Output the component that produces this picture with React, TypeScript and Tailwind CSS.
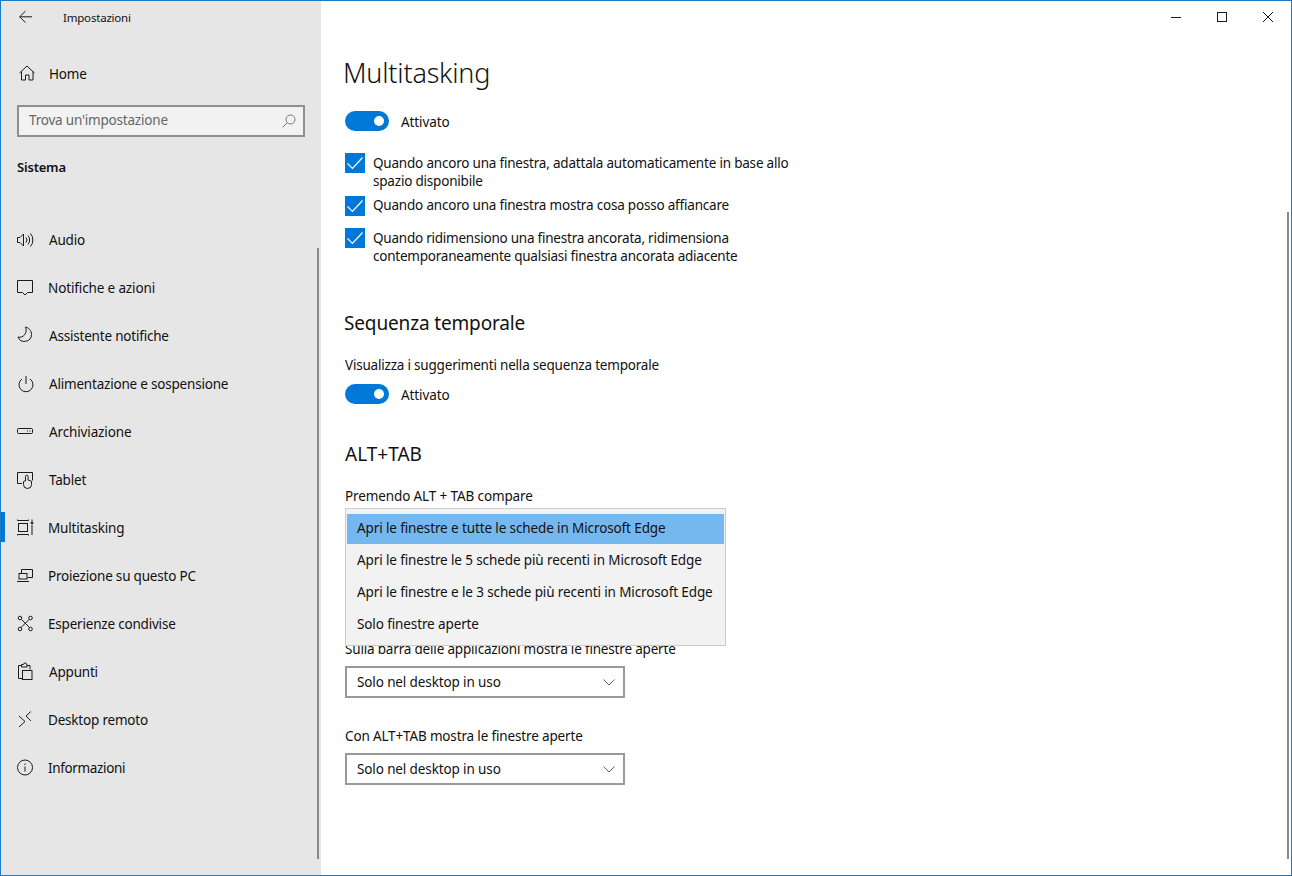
import React from "react";

const I = ({ children }: { children: React.ReactNode }) => (
  <svg width="20" height="20" viewBox="1 0 20 20" fill="none" stroke="#1a1a1a" strokeWidth="1" className="shrink-0">
    {children}
  </svg>
);

const icons: Record<string, React.ReactNode> = {
  Audio: (
    <I>
      <path d="M1.500 7.500h2.500l3.500-3.500v12l-3.500-3.500h-2.500z" />
      <path d="M10 7.500a4 4 0 0 1 0 5M12 5.500a7 7 0 0 1 0 9M14.500 3.500a10 10 0 0 1 0 13" />
    </I>
  ),
  "Notifiche e azioni": (
    <I>
      <path d="M1.500 2.500h15v12h-5l-2.500 2.500l-2.500-2.500h-5z" />
    </I>
  ),
  "Assistente notifiche": (
    <I>
      <path d="M9.500 1c3 .5 6 3.500 6 7.500a7 7 0 0 1-13.500 2.500c5 1.500 10-4 7.500-10z" />
    </I>
  ),
  "Alimentazione e sospensione": (
    <I>
      <path d="M10 2v8M6 5a7 7 0 1 0 8 0" />
    </I>
  ),
  Archiviazione: (
    <I>
      <rect x="1.500" y="6.500" width="15" height="5" rx="1" />
      <path d="M11 9h1M13.500 9h1" />
    </I>
  ),
  Tablet: (
    <I>
      <path d="M6 13.500h-4.500v-11h15v8" />
      <path d="M9.500 11V6.500a1.300 1.300 0 0 1 2.600 0V10l3.400 1.200v3.300a4 4 0 0 1-8 0v-2.500a1.500 1.500 0 0 1 2-1" />
    </I>
  ),
  Multitasking: (
    <I>
      <path d="M1.500 1.500v1h11v-1M1.500 17.500v-1h11v1" />
      <rect x="2.500" y="5.500" width="9" height="8" />
      <path d="M16 1.500v2M16 7v10" />
      <circle cx="16" cy="5" r="1" fill="#1a1a1a" />
    </I>
  ),
  "Proiezione su questo PC": (
    <I>
      <path d="M5.500 7V3.500h11v8h-5" />
      <rect x="3" y="7.500" width="8" height="5.500" />
      <path d="M1 15.500h12" />
    </I>
  ),
  "Esperienze condivise": (
    <I>
      <circle cx="4" cy="4" r="1.800" />
      <circle cx="14.500" cy="4" r="1.800" />
      <circle cx="4" cy="15" r="1.800" />
      <circle cx="14.500" cy="15" r="1.800" />
      <path d="M5.500 5.500l8 8M13 5.500l-8 8" />
    </I>
  ),
  Appunti: (
    <I>
      <path d="M6.500 16.500h-4v-13h3M11 3.500h3v4" />
      <path d="M5.500 5V2.500h2a1.500 1.500 0 0 1 3 0h.500V5z" />
      <rect x="6.500" y="8.500" width="9.500" height="9" />
    </I>
  ),
  "Desktop remoto": (
    <I>
      <path d="M3 6l6 5.500-6 5.500M15 1.500l-5 4.500 5 5" />
    </I>
  ),
  Informazioni: (
    <I>
      <circle cx="9" cy="9.500" r="7.500" />
      <path d="M9 8.500v5M9 5.500v1.500" />
    </I>
  ),
};

const items: [string, string][] = [
  ["Audio", "ml-3"],
  ["Notifiche e azioni", "ml-[11px] tracking-[-0.13px]"],
  ["Assistente notifiche", "ml-3"],
  ["Alimentazione e sospensione", "ml-3"],
  ["Archiviazione", "ml-3 tracking-[-0.13px]"],
  ["Tablet", "ml-3"],
  ["Multitasking", "ml-[11px]"],
  ["Proiezione su questo PC", "ml-[11px]"],
  ["Esperienze condivise", "ml-[11px]"],
  ["Appunti", "ml-3"],
  ["Desktop remoto", "ml-[11px]"],
  ["Informazioni", "ml-[11px] tracking-[-0.35px]"],
];

const Toggle = () => (
  <div className="flex items-center h-5">
    <div className="w-11 h-5 rounded-full bg-[#0078d7] flex items-center justify-end pr-[5px]">
      <div className="w-2.5 h-2.5 rounded-full bg-white" />
    </div>
    <span className="ml-3 pt-[2px] tracking-[-0.1px]">Attivato</span>
  </div>
);

const Check = ({ className, lines, textClass }: { className: string; lines: string[]; textClass: string }) => (
  <div className={"flex " + className}>
    <div className="w-5 h-5 bg-[#0078d7] shrink-0 flex items-center justify-center">
      <svg width="20" height="20" viewBox="0 0 20 20" fill="none" stroke="#fff" strokeWidth="1.200">
        <path d="M2.500 10.500l5 5L17.500 4.500" />
      </svg>
    </div>
    <div className={"ml-2 leading-[18px] " + textClass}>
      {lines.map((l) => (
        <div key={l}>{l}</div>
      ))}
    </div>
  </div>
);

const Select = ({ className }: { className: string }) => (
  <div className={"w-[280px] h-8 border-2 border-[#999999] flex items-center justify-between pl-2.5 pr-[8px] " + className}>
    <span className="tracking-[-0.12px]">Solo nel desktop in uso</span>
    <svg width="12" height="7" viewBox="0 0 12 7" fill="none" stroke="#666" strokeWidth="1">
      <path d="M0.500 0.500L6 6l5.500-5.500" />
    </svg>
  </div>
);

export default function App() {
  return (
    <div
      className="relative w-[1292px] h-[876px] border border-[#1a7ac5] flex bg-white text-[#111111] text-[13.5px] overflow-hidden tracking-[-0.2px]"
      style={{ fontFamily: '"Noto Sans", sans-serif' }}
    >
      <aside className="relative w-[320px] shrink-0 bg-[#e6e6e6]">
        <div className="flex items-center h-[31px] pl-[18px]">
          <svg width="14" height="14" viewBox="0 0 14 14" fill="none" stroke="#1a1a1a" strokeWidth="1">
            <path d="M6.500 1L.7 6.800l5.800 5.800M.7 6.800H13" />
          </svg>
          <span className="ml-[30px] text-[11.500px] pt-[2px]">Impostazioni</span>
        </div>
        <div className="flex items-center h-5 mt-[31px] pl-[18px]">
          <svg width="16" height="16" viewBox="0 0 16 16" fill="none" stroke="#1a1a1a" strokeWidth="1" className="mr-[14px]">
            <path d="M.5 8L8 1l7.500 7M2.500 6.500v8.500h4v-5h3.500v5h4V6.500" />
          </svg>
          <span className="pt-[2px]">Home</span>
        </div>
        <div className="mx-[16px] mt-[22px] w-[288px] h-[32px] border-2 border-[#8f8f8f] bg-[#f2f2f2] flex items-center justify-between pl-[10px] pr-[7px] text-[#666]">
          <span className="pb-[2px]">Trova un'impostazione</span>
          <svg width="14" height="14" viewBox="0 0 14 14" fill="none" stroke="#777" strokeWidth="1">
            <circle cx="8.500" cy="5.500" r="4.500" />
            <path d="M5.200 8.800L.7 13.300" />
          </svg>
        </div>
        <div className="ml-4 mt-[20px] font-semibold text-[13px] leading-5">Sistema</div>
        <nav className="mt-[39px]">
          {items.map(([label, gap]) => (
            <div key={label} className="relative h-12 flex items-center pl-[16px]">
              {label === "Multitasking" && <div className="absolute left-0 top-[8px] w-1 h-[30px] bg-[#0078d7]" />}
              {icons[label]}
              <span className={gap}>{label}</span>
            </div>
          ))}
        </nav>
        <div className="absolute left-[316px] top-[247px] w-[2px] h-[611px] bg-[#8a8a8a]" />
      </aside>

      <main className="flex-1 relative pl-[24px]">
        <div className="h-[31px] flex justify-end items-center">
          <svg width="12" height="12" viewBox="0 0 12 12" fill="none" stroke="#1a1a1a" strokeWidth="1" className="mr-[34px]">
            <path d="M1 6.500h10" />
          </svg>
          <svg width="12" height="12" viewBox="0 0 12 12" fill="none" stroke="#1a1a1a" strokeWidth="1" className="mr-[34px]">
            <rect x="1.500" y="1.500" width="9" height="9" />
          </svg>
          <svg width="12" height="12" viewBox="0 0 12 12" fill="none" stroke="#1a1a1a" strokeWidth="1" className="mr-[17px]">
            <path d="M1 1l10 10M11 1L1 11" />
          </svg>
        </div>
        <h1 className="-ml-[2px] mt-[19px] text-[27px] leading-[44px] font-light tracking-[-0.2px]">Multitasking</h1>
        <div className="mt-[16px]"><Toggle /></div>
        <Check
          className="mt-[22px]"
          textClass="mt-px"
          lines={["Quando ancoro una finestra, adattala automaticamente in base allo", "spazio disponibile"]}
        />
        <Check className="mt-[6px]" textClass="" lines={["Quando ancoro una finestra mostra cosa posso affiancare"]} />
        <Check
          className="mt-3"
          textClass="mt-px tracking-[-0.23px]"
          lines={["Quando ridimensiono una finestra ancorata, ridimensiona", "contemporaneamente qualsiasi finestra ancorata adiacente"]}
        />
        <h2 className="-ml-px mt-[44px] text-[19px] leading-7 tracking-[-0.15px]">Sequenza temporale</h2>
        <div className="mt-[18px] leading-5">Visualizza i suggerimenti nella sequenza temporale</div>
        <div className="mt-[9px]"><Toggle /></div>
        <h2 className="mt-[36px] text-[19px] leading-7 tracking-normal">ALT+TAB</h2>
        <div className="mt-[18px] leading-5 tracking-[-0.12px]">Premendo ALT + TAB compare</div>
        <div className="mt-[133px] leading-5 tracking-[-0.18px]">Sulla barra delle applicazioni mostra le finestre aperte</div>
        <Select className="mt-[7px]" />
        <div className="mt-[28px] leading-5 tracking-[-0.15px]">Con ALT+TAB mostra le finestre aperte</div>
        <Select className="mt-[7px]" />

        <div className="absolute left-[24px] top-[507px] w-[381px] h-[138px] border border-[#cccccc] bg-[#f2f2f2] pt-[5px] z-10 whitespace-nowrap tracking-[-0.115px]">
          <div className="mx-[1px] h-[30px] bg-[#75b8ef] flex items-center pl-[10px] pb-[2px]">Apri le finestre e tutte le schede in Microsoft Edge</div>
          <div className="h-8 mt-px flex items-center pl-[11px] pb-[2px]">Apri le finestre le 5 schede più recenti in Microsoft Edge</div>
          <div className="h-8 flex items-center pl-[11px] pb-[2px]">Apri le finestre e le 3 schede più recenti in Microsoft Edge</div>
          <div className="h-8 flex items-center pl-[11px] pb-[2px]">Solo finestre aperte</div>
        </div>
        <div className="absolute right-[2px] top-[211px] w-[2px] h-[647px] bg-[#8a8a8a]" />
      </main>
    </div>
  );
}
